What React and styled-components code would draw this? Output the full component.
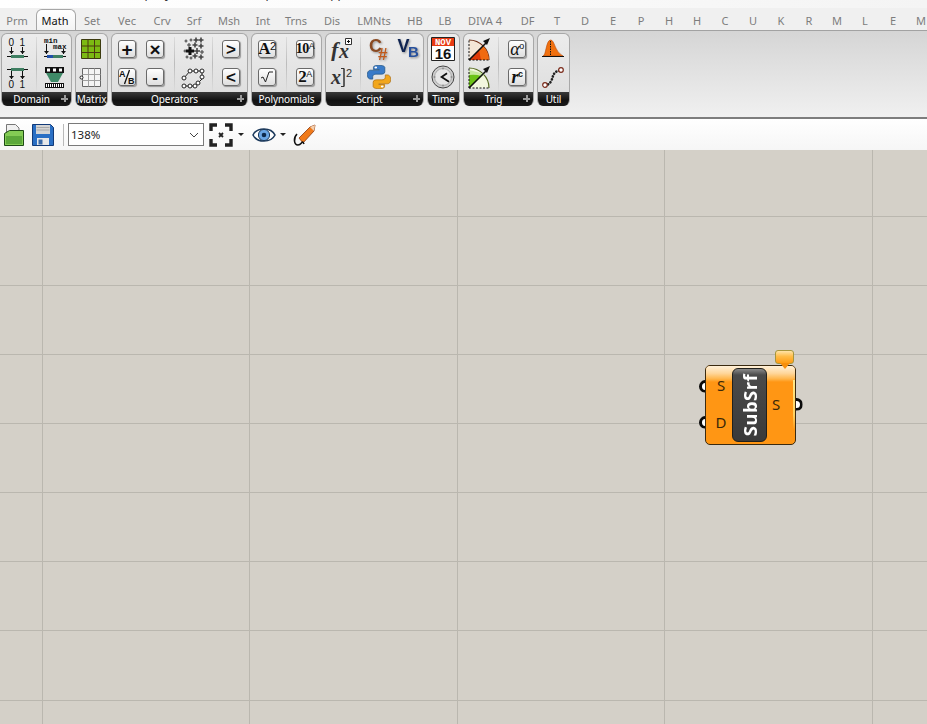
import React from 'react';
import styled, { createGlobalStyle } from 'styled-components';

const GlobalStyle = createGlobalStyle`
	html, body {
		margin: 0;
		padding: 0;
		height: 100%;
		overflow: hidden;
		background: #d4d0c8;
		font-family: "Noto Sans", "Open Sans", sans-serif;
	}
	#root {
		height: 100%;
	}
`;

// canvas grid: the lines sit on whole pixels, with the 207/208 and 69/70 rhythm of the picture
const GRID_LINE = '#bab7af';
const lineStops = (offsets, end) => {
	const stops = offsets.map((o) => `transparent ${o}px, ${GRID_LINE} ${o}px, ${GRID_LINE} ${o + 1}px, transparent ${o + 1}px`);
	return [...stops, `transparent ${end}px`].join(', ');
};
const COLUMN_LINES = lineStops([0, 207], 415);
const ROW_LINES = lineStops([0, 69, 138, 207, 276, 345, 414], 484);

// styled components
const Page = styled.div`
	display: flex;
	flex-direction: column;
	height: 724px;
	overflow: hidden;
`;
const TitleStrip = styled.div`
	display: flex;
	height: 8px;
	overflow: hidden;
	background: linear-gradient(90deg, #ffffff 0%, #fbfbfb 45%, #f4f4f4 100%);
`;
const TitleBit = styled.span`
	width: ${(p) => p.$w}px;
	flex: none;
	margin-top: -14px;
	font-size: 12px;
	line-height: 16px;
	color: #333;
	text-align: right;
`;
const TabRow = styled.div`
	display: flex;
	height: 22px;
	flex: none;
	background: #f0f0f0;
	overflow: hidden;
`;
const Tab = styled.div`
	width: ${(p) => p.$w}px;
	flex: none;
	box-sizing: border-box;
	display: flex;
	align-items: center;
	justify-content: center;
	padding-top: 2px;
	font-size: 11px;
	color: ${(p) => (p.$active ? '#111' : '#7d7d7d')};
	${(p) =>
		p.$active &&
		`
		margin: 1px 0 0 2px;
		padding: 0 2px 0 0;
		border: 1px solid #a6a6a6;
		border-bottom: none;
		border-radius: 6px 6px 0 0;
		background: linear-gradient(#ffffff, #f3f3f3);
	`}
`;
const Ribbon = styled.div`
	display: flex;
	gap: 3px;
	height: 89px;
	flex: none;
	box-sizing: border-box;
	padding: 2px 0 0 1px;
	border-top: 1px solid #a2a2a2;
	border-bottom: 2px solid #7d7d7d;
	background: linear-gradient(#d5d5d5, #f0f0f0);
`;
const Group = styled.div`
	display: flex;
	flex-direction: column;
	height: 73px;
	box-sizing: border-box;
	border: 1px solid #a8a8a8;
	border-bottom: none;
	border-radius: 6px;
	overflow: hidden;
	background: linear-gradient(#ececec, #dcdcdc);
`;
const GroupBody = styled.div`
	display: flex;
	flex: 1;
	padding: 3px 4px 0 3px;
`;
const IconCol = styled.div`
	display: flex;
	flex-direction: column;
	gap: 4px;
	width: 24px;
	margin-left: ${(p) => (p.$tight ? 4 : 0)}px;
`;
const Divider = styled.div`
	width: 1px;
	height: 54px;
	margin: 0 6px 0 7px;
	background: linear-gradient(#dcdcdc, #bcbcbc 50%, #dcdcdc);
`;
const IconCell = styled.div`
	display: flex;
	align-items: center;
	justify-content: center;
	width: 24px;
	height: 24px;
`;
const GroupTitle = styled.div`
	position: relative;
	display: flex;
	align-items: center;
	justify-content: center;
	height: 14px;
	flex: none;
	box-sizing: border-box;
	padding-right: ${(p) => (p.$plus ? 10 : 0)}px;
	font-size: 10px;
	letter-spacing: -0.1px;
	line-height: 14px;
	color: #fff;
	white-space: nowrap;
	background: linear-gradient(#3a3a3a, #111111 60%, #1a1a1a);
`;
const Plus = styled.span`
	position: absolute;
	right: 3px;
	top: 3px;
	width: 7px;
	height: 7px;
	background:
		linear-gradient(#9c9c9c, #9c9c9c) center / 7px 2px no-repeat,
		linear-gradient(#9c9c9c, #9c9c9c) center / 2px 7px no-repeat;
`;
const KeyCap = styled.div`
	position: relative;
	box-sizing: border-box;
	display: flex;
	align-items: center;
	justify-content: center;
	width: 18px;
	height: 18px;
	border: 1px solid #6a6a6a;
	border-radius: 3px;
	color: #111;
	background: linear-gradient(#ffffff, #dedede);
	box-shadow: 1px 1px 1px rgba(0, 0, 0, 0.35);
	font: bold ${(p) => p.$size || 17}px "Liberation Sans", sans-serif;
	line-height: 1;
`;
const SerifKey = styled(KeyCap)`
	font: ${(p) => p.$weight || 'bold'} ${(p) => p.$size || 17}px "Liberation Serif", serif;
	font-style: ${(p) => (p.$italic ? 'italic' : 'normal')};
	letter-spacing: -0.5px;
	padding-right: 4px;
`;
const Sup = styled.span`
	font: ${(p) => p.$w || 'normal'} ${(p) => p.$size || 9}px "Liberation Sans", sans-serif;
	margin-top: -7px;
	margin-right: -4px;
`;
const Toolbar = styled.div`
	display: flex;
	align-items: center;
	height: 31px;
	flex: none;
	box-sizing: border-box;
	padding: 0 0 0 3px;
	background: linear-gradient(#ffffff, #f6f6f6);
`;
const ToolGap = styled.span`
	width: ${(p) => p.$w}px;
	flex: none;
`;
const ToolSep = styled.div`
	width: 1px;
	height: 22px;
	margin: 0 4px 0 8px;
	background: #b9b9b9;
`;
const Combo = styled.div`
	display: flex;
	align-items: center;
	justify-content: space-between;
	width: 136px;
	height: 23px;
	box-sizing: border-box;
	margin-right: 5px;
	padding: 0 4px 0 2px;
	border: 1px solid #7a7a7a;
	background: #fff;
	font-size: 11.5px;
	color: #222;
`;
const Caret = styled.span`
	width: 0;
	height: 0;
	margin: 0 ${(p) => p.$right}px 0 ${(p) => p.$left}px;
	border-left: 3px solid transparent;
	border-right: 3px solid transparent;
	border-top: 3px solid #222;
`;
const Canvas = styled.div`
	position: relative;
	flex: 1;
	background-color: #d4d0c8;
	background-image:
		linear-gradient(90deg, ${COLUMN_LINES}),
		linear-gradient(${ROW_LINES});
	background-size: 415px 100%, 100% 484px;
	background-position: 42px 0, 0 66px;
`;
const Node = styled.div`
	position: absolute;
	left: 705px;
	top: 215px;
	box-sizing: border-box;
	display: flex;
	width: 91px;
	height: 80px;
	border: 1px solid #3a2a10;
	border-radius: 5px;
	background: #ff9614;
`;
const TopBand = styled.span`
	position: absolute;
	left: 0;
	right: 0;
	top: 0;
	height: 16px;
	border-radius: 4px 4px 0 0;
	background: linear-gradient(#fff0d8, #ffd79c 45%, #ffb64c 80%, #ff9614);
`;
const GlowEdge = styled.span`
	position: absolute;
	right: 0;
	top: 14px;
	width: 2px;
	height: 50px;
	background: linear-gradient(#ffe88a, #ffd060 70%, #ff9614);
`;
const PortCol = styled.div`
	position: relative;
	display: flex;
	flex-direction: column;
	align-items: center;
	width: 26px;
	flex: none;
	box-sizing: border-box;
	padding: ${(p) => p.$top}px ${(p) => p.$right}px 0 ${(p) => p.$left}px;
	gap: 17px;
	font: 15px "Noto Sans", sans-serif;
	line-height: 20px;
	color: #3a2808;
`;
const Capsule = styled.div`
	position: relative;
	display: flex;
	align-items: center;
	justify-content: center;
	width: 35px;
	height: 74px;
	margin-top: 2px;
	flex: none;
	box-sizing: border-box;
	border: 1px solid #20201c;
	border-radius: 6px;
	background: linear-gradient(#8a8a8a 0, #4a4a4a 6px, #3a3a3a 100%);
`;
const CapsuleText = styled.span`
	writing-mode: vertical-rl;
	transform: rotate(180deg);
	font: bold 18.5px "Open Sans", sans-serif;
	letter-spacing: 0.4px;
	color: #fff;
`;
const Grip = styled.span`
	position: absolute;
	left: ${(p) => p.$x}px;
	top: ${(p) => p.$y}px;
	width: 7px;
	height: 7px;
	border: 3px solid #0a0a0a;
	border-radius: 50%;
	background: #ffffff;
	clip-path: ${(p) => (p.$out ? 'inset(0 0 0 50%)' : 'inset(0 50% 0 0)')};
`;
const Bubble = styled.div`
	position: absolute;
	left: 69px;
	top: -16px;
	width: 19px;
	height: 14px;
	box-sizing: border-box;
	border: 1px solid #a8963c;
	border-radius: 3px;
	background: linear-gradient(#ffe4a8, #ffbc48 45%, #ff9c14);
	&::after {
		content: '';
		position: absolute;
		left: 4px;
		top: 12px;
		border-left: 5px solid transparent;
		border-right: 5px solid transparent;
		border-top: 6px solid #f78f0c;
	}
`;

// drawings
const Svg = ({ w = 24, h = 24, box, stretch, style, children }) => (
	<svg width={w} height={h} viewBox={box || `0 0 ${w} ${h}`} fill="none" preserveAspectRatio={stretch ? 'none' : undefined} style={style}>
		{children}
	</svg>
);
const SANS = { fontFamily: 'Liberation Sans, sans-serif', fill: '#111' };
const MONO = { fontFamily: 'Liberation Mono, monospace', fill: '#111' };
const SERIF = { fontFamily: 'Liberation Serif, serif', fill: '#333' };
const DownTick = ({ x, y1, y2 }) => (
	<g>
		<path d={`M${x} ${y1}V${y2}`} stroke="#111" />
		<path d={`M${x - 2.5} ${y2 - 3}h5l-2.5 3z`} fill="#111" />
	</g>
);

const DomainTop = () => (
	<Svg>
		<text x="3.5" y="9" fontSize="10" {...SANS}>0</text>
		<text x="14.5" y="9" fontSize="10" {...SANS}>1</text>
		<DownTick x={6.5} y1={10} y2={17} />
		<DownTick x={17.5} y1={10} y2={17} />
		<path d="M2 19.5H23" stroke="#111" />
		<path d="M6 18h13v3H6z" fill="#3f7f62" />
	</Svg>
);
const DomainBottom = () => (
	<Svg>
		<path d="M2 4.5H23" stroke="#111" />
		<path d="M6 3h13v3H6z" fill="#3f7f62" />
		<DownTick x={6.5} y1={6} y2={14} />
		<DownTick x={17.5} y1={6} y2={14} />
		<text x="3.5" y="23" fontSize="10" {...SANS}>0</text>
		<text x="14.5" y="23" fontSize="10" {...SANS}>1</text>
	</Svg>
);
const DomainMinMax = () => (
	<Svg>
		<text x="1" y="6" fontSize="7.5" fontWeight="bold" {...MONO}>min</text>
		<text x="10" y="12" fontSize="7.5" fontWeight="bold" {...MONO}>max</text>
		<DownTick x={3.5} y1={7} y2={17} />
		<DownTick x={20.5} y1={12} y2={17} />
		<path d="M1 19.5H23" stroke="#111" />
		<path d="M4 18h6v3H4z" fill="#1f4fa8" />
		<path d="M10 18h10v3H10z" fill="#3f7f62" />
	</Svg>
);
const DomainFunnel = () => (
	<Svg>
		<path d="M2 2h19v6H2z" fill="#111" />
		<path d="M4 3.5h3v3H4zM10 3.5h3v3h-3zM16 3.5h3v3h-3z" fill="#fff" />
		<path d="M3 8h17l-5 9H8z" fill="#3f8a68" />
		<path d="M2 18h19v5H2z" fill="#111" />
		<path d="M3.5 19v3M5.5 19v3M7.5 19v3M9.5 19v3M11.5 19v3M13.5 19v3M15.5 19v3M17.5 19v3M19.5 19v3" stroke="#fff" />
	</Svg>
);
const GreenMatrix = () => (
	<Svg>
		<path d="M2.5 2.5h19v19h-19z" fill="#7cba12" stroke="#3c3c10" />
		<path d="M9 2.5v19M15.5 2.5v19M2.5 9h19M2.5 15.5h19" stroke="#4a3a10" />
	</Svg>
);
const BlankMatrix = () => (
	<Svg>
		<path d="M3.5 3.5h18v18h-18z" fill="#f4f4f4" stroke="#666" />
		<path d="M9.5 3.5v18M15.5 3.5v18M3.5 9.5h18M3.5 15.5h18" stroke="#a0a0a0" />
		<circle cx="2.5" cy="12.5" r="1.5" fill="#fff" stroke="#222" />
	</Svg>
);
const PLUS_SPOTS = [
	[5, 4, 1.5], [10, 3, 1.5], [15, 3, 2.5], [20, 3, 2.5], [8, 8, 2], [14, 8, 2.5],
	[20, 9, 2.5], [4, 14, 1.5], [9, 14, 4], [16, 14, 3], [21, 15, 2], [14, 19, 2.5],
	[20, 20, 2.5], [6, 20, 1.5], [10, 21, 1.5],
];
const Scatter = () => (
	<Svg>
		{PLUS_SPOTS.map(([x, y, r]) => (
			<path
				key={`${x}-${y}`}
				d={`M${x - r} ${y}h${r * 2}M${x} ${y - r}v${r * 2}`}
				stroke={r > 3 ? '#111' : '#444'}
				strokeWidth={r > 3 ? 3 : r >= 2.5 ? 1.6 : 1.1}
			/>
		))}
	</Svg>
);
const Chain = () => (
	<Svg>
		<path d="M3 13L9 6H21V14L14 21H3" stroke="#222" />
		{[[3, 13], [9, 6], [15, 6], [21, 6], [21, 12], [17, 18], [14, 21], [9, 21], [3, 21]].map(([x, y]) => (
			<circle key={`${x}-${y}`} cx={x} cy={y} r="2" fill="#fff" stroke="#222" />
		))}
	</Svg>
);
const Fx = () => (
	<Svg>
		<text x="2" y="20" fontSize="22" fontStyle="italic" fontWeight="bold" {...SERIF}>f</text>
		<text x="10" y="21" fontSize="20" fontStyle="italic" fontWeight="bold" {...SERIF}>x</text>
		<path d="M16.5 1.5h6v6h-6z" fill="#fff" stroke="#333" />
		<path d="M18 4.5h3M19.5 3v3" stroke="#111" />
	</Svg>
);
const XPower = () => (
	<Svg>
		<text x="2" y="19" fontSize="20" fontStyle="italic" fontWeight="bold" {...SERIF}>x</text>
		<path d="M12 3.5h3v18h-3M15 3.5v18" stroke="#333" />
		<text x="17" y="12" fontSize="11" {...SANS} fill="#333">2</text>
	</Svg>
);
const CSharp = () => (
	<Svg style={{ overflow: 'visible', filter: 'drop-shadow(1px 1px 1px rgba(0,0,0,.35))' }}>
		<text x="2" y="15" fontSize="18" fontWeight="bold" {...SANS} fill="#8a4a22">C</text>
		<text x="11" y="22.5" fontSize="17" fontWeight="bold" {...SANS} fill="#c05a1c">#</text>
	</Svg>
);
const VB = () => (
	<Svg style={{ overflow: 'visible', filter: 'drop-shadow(1px 1px 1px rgba(0,0,0,.4))' }}>
		<text x="2.5" y="15" fontSize="18" fontWeight="bold" {...SANS} fill="#0e2350">V</text>
		<text x="13" y="20" fontSize="15" fontWeight="bold" {...SANS} fill="#27509c">B</text>
	</Svg>
);
const PY = 'M11.9 2C8 2 8.2 3.7 8.2 3.7V5.6h3.9v.6H6.6S4 5.9 4 9.9s2.3 3.9 2.3 3.9h1.4v-1.9s-.1-2.3 2.3-2.3h3.8s2.2 0 2.2-2.1V4.1S16.3 2 11.9 2z';
const Python = () => (
	<Svg box="3.8 1.8 16.4 20.4" stretch>
		<path d={PY} fill="#3a7bc8" stroke="#1d4f7c" strokeWidth=".5" />
		<path d={PY} transform="rotate(180 12 12)" fill="#f2a71c" stroke="#a8680c" strokeWidth=".5" />
		<circle cx="9.8" cy="3.9" r=".9" fill="#fff" />
		<circle cx="14.2" cy="20.1" r=".9" fill="#fff" />
	</Svg>
);
const Calendar = () => (
	<Svg>
		<path d="M0.5 0.5h23v23H0.5z" fill="#fff" stroke="#222" />
		<path d="M1 1h22v8H1z" fill="#e83a12" />
		<text x="12" y="8" textAnchor="middle" fontSize="9" fontWeight="bold" {...MONO} fill="#fff">NOV</text>
		<text x="12" y="22" textAnchor="middle" fontSize="15" fontWeight="bold" {...SANS}>16</text>
	</Svg>
);
const Clock = () => (
	<Svg>
		<circle cx="12" cy="12" r="11" fill="#cfcfcf" stroke="#444" />
		<circle cx="12" cy="12" r="8.5" fill="#e6e6e6" stroke="#aaa" />
		<path d="M16 8.3L10.6 12L18 16.7" stroke="#111" strokeWidth="1.8" />
		<path d="M12 2.5v2M12 19.5v2M2.5 12h2M19.5 12h2" stroke="#777" />
	</Svg>
);
const TrigUp = () => (
	<Svg>
		<path d="M2 23V3A20 20 0 0 1 22 23z" fill="#f4e6d6" />
		<path d="M2 3A20 20 0 0 1 22 23" stroke="#6a2a10" strokeWidth="1.2" />
		<path d="M2 23L16 9A20 20 0 0 1 22 23z" fill="#f06a10" />
		<path d="M2 23L12 13L14 23z" fill="#e03a08" />
		<path d="M2 23V3M2 23H22" stroke="#111" strokeDasharray="2 1.5" />
		<path d="M2 23L20 5" stroke="#111" strokeWidth="1.6" />
		<path d="M23 1L16 4L20 8z" fill="#111" />
	</Svg>
);
const TrigDown = () => (
	<Svg>
		<path d="M2 23V3A20 20 0 0 1 22 23z" fill="#f2f6de" />
		<path d="M2 3A20 20 0 0 1 22 23" stroke="#556a20" strokeWidth="1.2" />
		<path d="M2 23V5L18 9L2 23z" fill="#c8e8a0" />
		<path d="M2 23V10Q9 9 14 11z" fill="#6cc218" />
		<path d="M2 23V3M2 23H22" stroke="#111" strokeDasharray="2 1.5" />
		<path d="M2 23L20 5" stroke="#111" strokeWidth="1.6" />
		<path d="M23 1L16 4L20 8z" fill="#111" />
	</Svg>
);
const Bell = () => (
	<Svg>
		<path d="M2 19C5 19 5 3 9.5 3S13 14 22 19z" fill="#f0700f" stroke="#b84a08" strokeWidth=".6" />
		<path d="M9.5 4V19" stroke="#111" strokeDasharray="1.5 1" />
		<path d="M1 19.5H23" stroke="#111" />
	</Svg>
);
const Curve = () => (
	<Svg>
		<path d="M4 20C10 20 11 14 12 11S15 6 20 5" stroke="#222" strokeWidth="2.6" strokeLinecap="round" strokeDasharray="0.1 3" />
		<circle cx="4" cy="20" r="2.3" fill="#fff" stroke="#7a2a1a" strokeWidth="1.2" />
		<circle cx="20" cy="5" r="2.3" fill="#fff" stroke="#7a2a1a" strokeWidth="1.2" />
	</Svg>
);
const FolderIcon = () => (
	<Svg w={22} h={24}>
		<path d="M3.5 1.5h9l3.5 3.5v8H3.5z" fill="#f0f0f0" stroke="#777" />
		<path d="M1.5 22.5V10.5l5-3h14v15z" fill="#84cc54" stroke="#1c4a14" />
		<path d="M3 13h16v8H3z" fill="#5ca83a" />
	</Svg>
);
const FloppyIcon = () => (
	<Svg>
		<path d="M1.5 1.5h18l3 3v18h-21z" fill="#2a6fc4" stroke="#123a78" />
		<path d="M5 2h14v9H5z" fill="#d4d4d4" />
		<path d="M5.5 4.5h13M5.5 7h13" stroke="#a8a8a8" />
		<path d="M6 15h12v7H6z" fill="#e8e8e8" />
		<path d="M7.5 16.5h4v5h-4z" fill="#3a6aa8" />
	</Svg>
);
const ExtentsIcon = () => (
	<Svg>
		<path d="M2 8V2h6M16 2h6v6M22 16v6h-6M8 22H2v-6" stroke="#222" strokeWidth="3.4" />
		<path d="M10 10l4 4M14 10l-4 4" stroke="#222" strokeWidth="1.8" />
	</Svg>
);
const EyeIcon = () => (
	<Svg>
		<path d="M1 12C5 4 19 4 23 12C19 20 5 20 1 12z" fill="#fff" stroke="#1c3a5c" strokeWidth="1.6" />
		<circle cx="12" cy="12" r="5.6" fill="#6aa6e4" stroke="#1c3a5c" />
		<circle cx="12" cy="12" r="2.3" fill="#0e2a4c" />
	</Svg>
);
const PenIcon = () => (
	<Svg>
		<path d="M7 15L18 4L23 2L22 8L11 20z" fill="#f07a1a" stroke="#8a3a10" strokeWidth=".8" />
		<path d="M18 4L23 2L22 8z" fill="#f4d0b0" />
		<path d="M5 11C1 15 2 22 6 22S10 16 12 21" stroke="#111" strokeWidth="1.6" />
	</Svg>
);

// content
const Frac = () => (
	<Svg w={16} h={16}>
		<text x="0" y="8" fontSize="9" {...SANS}>A</text>
		<path d="M10.5 1L5.5 15" stroke="#111" strokeWidth="1.3" />
		<text x="9" y="15" fontSize="9" {...SANS}>B</text>
	</Svg>
);
const Radical = () => (
	<Svg w={16} h={16}>
		<path d="M2 9l2-1 2.5 5L10 3h4" stroke="#222" strokeWidth="1" />
	</Svg>
);

const GROUPS = [
	{
		title: 'Domain',
		plus: true,
		cols: [
			[<DomainTop />, <DomainBottom />],
			'|',
			[<DomainMinMax />, <DomainFunnel />],
		],
	},
	{ title: 'Matrix', cols: [[<GreenMatrix />, <BlankMatrix />]] },
	{
		title: 'Operators',
		plus: true,
		cols: [
			[<KeyCap $size={19}>+</KeyCap>, <KeyCap><Frac /></KeyCap>],
			[<KeyCap $size={19}>×</KeyCap>, <KeyCap>-</KeyCap>],
			'|',
			[<Scatter />, <Chain />],
			'|',
			[<KeyCap>&gt;</KeyCap>, <KeyCap>&lt;</KeyCap>],
		],
	},
	{
		title: 'Polynomials',
		cols: [
			[<SerifKey>A<Sup $size={11}>2</Sup></SerifKey>, <KeyCap><Radical /></KeyCap>],
			'|',
			[<SerifKey $size={14}>10<Sup>A</Sup></SerifKey>, <SerifKey>2<Sup>A</Sup></SerifKey>],
		],
	},
	{
		title: 'Script',
		plus: true,
		cols: [
			[<Fx />, <XPower />],
			'|',
			[<CSharp />, <Python />],
			[<VB />],
		],
	},
	{ title: 'Time', cols: [[<Calendar />, <Clock />]] },
	{
		title: 'Trig',
		plus: true,
		cols: [
			[<TrigUp />, <TrigDown />],
			'|',
			[
				<SerifKey $italic $weight="normal" $size={18}>α<Sup>o</Sup></SerifKey>,
				<SerifKey $italic $size={18}>r<Sup $w="bold">c</Sup></SerifKey>,
			],
		],
	},
	{ title: 'Util', cols: [[<Bell />, <Curve />]] },
];

const TABS = [
	['Prm', 34], ['Math', 40, true], ['Set', 32], ['Vec', 38], ['Crv', 32], ['Srf', 32], ['Msh', 38],
	['Int', 30], ['Trns', 36], ['Dis', 36], ['LMNts', 48], ['HB', 34], ['LB', 26], ['DIVA 4', 54], ['DF', 31],
	['T', 28], ['D', 28], ['E', 28], ['P', 28], ['H', 28], ['H', 28], ['C', 28], ['U', 28], ['K', 28],
	['R', 28], ['M', 28], ['L', 28], ['E', 28], ['M', 28],
];

// markup
const RibbonGroup = ({ title, plus, cols }) => (
	<Group>
		<GroupBody>
			{cols.map((col, i) => {
				if (col === '|') return <Divider key={i} />;
				return (
					<IconCol key={i} $tight={i > 0 && cols[i - 1] !== '|'}>
						{col.map((icon, j) => (
							<IconCell key={j}>{icon}</IconCell>
						))}
					</IconCol>
				);
			})}
		</GroupBody>
		<GroupTitle $plus={plus}>
			{title}
			{plus && <Plus />}
		</GroupTitle>
	</Group>
);

const App = () => {
	return (
		<Page>
			<GlobalStyle />
			<TitleStrip>
				<TitleBit $w={152}>p</TitleBit>
				<TitleBit $w={19}>y</TitleBit>
				<TitleBit $w={102}>p</TitleBit>
				<TitleBit $w={72}>pp</TitleBit>
			</TitleStrip>
			<TabRow>
				{TABS.map(([label, w, active], i) => (
					<Tab key={i} $w={w} $active={active}>
						{label}
					</Tab>
				))}
			</TabRow>
			<Ribbon>
				{GROUPS.map((g) => (
					<RibbonGroup key={g.title} {...g} />
				))}
			</Ribbon>
			<Toolbar>
				<FolderIcon />
				<ToolGap $w={6} />
				<FloppyIcon />
				<ToolSep />
				<Combo>
					138%
					<svg width="10" height="6" viewBox="0 0 10 6" fill="none">
						<path d="M1 1l4 4 4-4" stroke="#444" />
					</svg>
				</Combo>
				<ExtentsIcon />
				<Caret $left={5} $right={8} />
				<EyeIcon />
				<Caret $left={4} $right={6} />
				<PenIcon />
			</Toolbar>
			<Canvas>
				<Node>
					<TopBand />
					<GlowEdge />
					<Bubble />
					<Grip $x={-7.5} $y={13.5} />
					<Grip $x={-7.5} $y={49.5} />
					<Grip $x={83.5} $y={31.5} $out />
					<PortCol $top={9} $left={4} $right={0}>
						<span>S</span>
						<span>D</span>
					</PortCol>
					<Capsule>
						<CapsuleText>SubSrf</CapsuleText>
					</Capsule>
					<PortCol $top={28} $left={0} $right={8}>
						<span>S</span>
					</PortCol>
				</Node>
			</Canvas>
		</Page>
	);
};

export default App;
